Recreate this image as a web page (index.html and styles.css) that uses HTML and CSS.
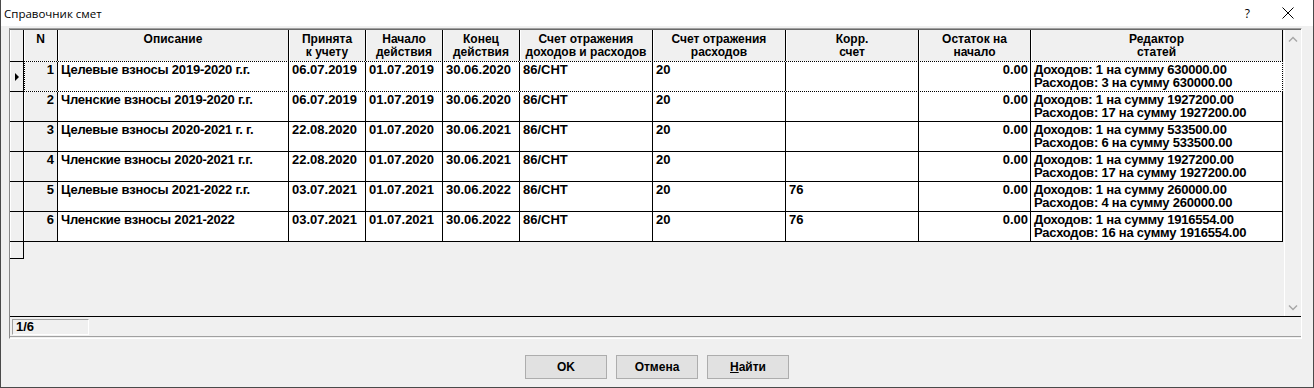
FILE: index.html
```html
<!DOCTYPE html>
<html lang="ru">
<head>
<meta charset="utf-8">
<title>Справочник смет</title>
<link rel="stylesheet" href="styles.css">
</head>
<body>
<div class="window">
  <div class="titlebar">
    <span class="title">Справочник смет</span>
    <span class="help">?</span>
    <svg class="close" width="12" height="12" viewBox="0 0 12 12"><path d="M0.5 0.5 L11.5 11.5 M11.5 0.5 L0.5 11.5" stroke="#000" stroke-width="1" fill="none"/></svg>
  </div>
  <div class="content">
    <div class="frame">
      <div class="gridbox">
        <div class="grid">
          <div class="c h ind"></div>
          <div class="c h">N</div>
          <div class="c h">Описание</div>
          <div class="c h">Принята<br>к учету</div>
          <div class="c h">Начало<br>действия</div>
          <div class="c h">Конец<br>действия</div>
          <div class="c h">Счет отражения<br>доходов и расходов</div>
          <div class="c h">Счет отражения<br>расходов</div>
          <div class="c h">Корр.<br>счет</div>
          <div class="c h">Остаток на<br>начало</div>
          <div class="c h">Редактор<br>статей</div>

          <div class="c ind"><span class="arrow"></span></div>
          <div class="c num">1</div>
          <div class="c t">Целевые взносы 2019-2020 г.г.</div>
          <div class="c">06.07.2019</div>
          <div class="c">01.07.2019</div>
          <div class="c">30.06.2020</div>
          <div class="c">86/СНТ</div>
          <div class="c">20</div>
          <div class="c"></div>
          <div class="c r">0.00</div>
          <div class="c t">Доходов: 1 на сумму 630000.00<br>Расходов: 3 на сумму 630000.00</div>

          <div class="c ind"></div>
          <div class="c num">2</div>
          <div class="c t">Членские взносы 2019-2020 г.г.</div>
          <div class="c">06.07.2019</div>
          <div class="c">01.07.2019</div>
          <div class="c">30.06.2020</div>
          <div class="c">86/СНТ</div>
          <div class="c">20</div>
          <div class="c"></div>
          <div class="c r">0.00</div>
          <div class="c t">Доходов: 1 на сумму 1927200.00<br>Расходов: 17 на сумму 1927200.00</div>

          <div class="c ind"></div>
          <div class="c num">3</div>
          <div class="c t">Целевые взносы 2020-2021 г. г.</div>
          <div class="c">22.08.2020</div>
          <div class="c">01.07.2020</div>
          <div class="c">30.06.2021</div>
          <div class="c">86/СНТ</div>
          <div class="c">20</div>
          <div class="c"></div>
          <div class="c r">0.00</div>
          <div class="c t">Доходов: 1 на сумму 533500.00<br>Расходов: 6 на сумму 533500.00</div>

          <div class="c ind"></div>
          <div class="c num">4</div>
          <div class="c t">Членские взносы 2020-2021 г.г.</div>
          <div class="c">22.08.2020</div>
          <div class="c">01.07.2020</div>
          <div class="c">30.06.2021</div>
          <div class="c">86/СНТ</div>
          <div class="c">20</div>
          <div class="c"></div>
          <div class="c r">0.00</div>
          <div class="c t">Доходов: 1 на сумму 1927200.00<br>Расходов: 17 на сумму 1927200.00</div>

          <div class="c ind"></div>
          <div class="c num">5</div>
          <div class="c t">Целевые взносы 2021-2022 г.г.</div>
          <div class="c">03.07.2021</div>
          <div class="c">01.07.2021</div>
          <div class="c">30.06.2022</div>
          <div class="c">86/СНТ</div>
          <div class="c">20</div>
          <div class="c">76</div>
          <div class="c r">0.00</div>
          <div class="c t">Доходов: 1 на сумму 260000.00<br>Расходов: 4 на сумму 260000.00</div>

          <div class="c ind"></div>
          <div class="c num">6</div>
          <div class="c t">Членские взносы 2021-2022</div>
          <div class="c">03.07.2021</div>
          <div class="c">01.07.2021</div>
          <div class="c">30.06.2022</div>
          <div class="c">86/СНТ</div>
          <div class="c">20</div>
          <div class="c">76</div>
          <div class="c r">0.00</div>
          <div class="c t">Доходов: 1 на сумму 1916554.00<br>Расходов: 16 на сумму 1916554.00</div>

          <div class="c ind"></div>

          <div class="focus"></div>
        </div>
        <div class="scroll">
          <svg width="10" height="6" viewBox="0 0 10 6"><polyline points="1,5.5 5,1.5 9,5.5" stroke="#a6a6a6" stroke-width="1.4" fill="none"/></svg>
          <svg width="10" height="6" viewBox="0 0 10 6"><polyline points="1,0.5 5,4.5 9,0.5" stroke="#a6a6a6" stroke-width="1.4" fill="none"/></svg>
        </div>
      </div>
      <div class="status">
        <div class="panel">1/6</div>
      </div>
    </div>
    <div class="buttons">
      <div class="btn">OK</div>
      <div class="btn">Отмена</div>
      <div class="btn"><span class="ul">Н</span>айти</div>
    </div>
  </div>
</div>
</body>
</html>
```

FILE: styles.css
```css
html, body {
  margin: 0;
  padding: 0;
  background: #f0f0f0;
}

.window {
  width: 1314px;
  height: 388px;
  box-sizing: border-box;
  border: 1px solid #4a4a4a;
  border-top: none;
  background: #f0f0f0;
  display: flex;
  flex-direction: column;
  overflow: hidden;
}

.titlebar {
  height: 26px;
  flex: none;
  background: #fff;
  display: flex;
  align-items: center;
  padding-left: 3px;
  font-family: "Open Sans", "Noto Sans", sans-serif;
  font-size: 11.5px;
  color: #000;
}

.title {
  flex: 1;
}

.help {
  font-size: 12px;
  margin-right: 32px;
}

.close {
  margin-right: 19px;
}

.content {
  flex: 1;
  padding: 2px 0 0 8px;
}

.frame {
  width: 1293px;
  box-sizing: border-box;
  border: 1px solid;
  border-color: #a0a0a0 #ffffff #ffffff #8a8a8a;
  padding-bottom: 1px;
}

.gridbox {
  display: flex;
  height: 288px;
  box-sizing: border-box;
  border-top: 1px solid #696969;
  border-bottom: 1px solid #000;
  background: #f0f0f0;
}

.grid {
  position: relative;
  display: grid;
  width: 1273px;
  grid-template-columns: 14px 34px 231px 77px 77px 77px 133px 133px 133px 112px 252px;
  grid-template-rows: 32px repeat(6, 30px) 17px;
  align-content: start;
  font-family: "Liberation Sans", Arial, sans-serif;
  font-weight: bold;
  font-size: 13px;
  line-height: 13px;
  color: #000;
}

.c {
  box-sizing: border-box;
  border-right: 1px solid #000;
  border-bottom: 1px solid #000;
  background: #fff;
  padding: 1px 2px 0 3px;
  white-space: nowrap;
  overflow: hidden;
}

.t {
  letter-spacing: -0.22px;
}

.h {
  background: #f0f0f0;
  text-align: center;
  font-size: 12px;
  padding: 3px 1px 0 1px;
  box-shadow: inset 1px 0 0 #fff;
}

.ind {
  background: #f0f0f0;
  padding: 0;
  display: flex;
  align-items: center;
  padding-left: 5px;
  box-shadow: inset 1px 0 0 #fff;
}

.h.ind {
  padding: 0;
}

.arrow {
  width: 0;
  height: 0;
  border-left: 4px solid #000;
  border-top: 4px solid transparent;
  border-bottom: 4px solid transparent;
}

.num {
  background: #f0f0f0;
  text-align: right;
  padding-right: 3px;
  box-shadow: inset 1px 0 0 #fff;
}

.r {
  text-align: right;
}

/* keyboard focus rectangle drawn over the current row */
.focus {
  position: absolute;
  left: 14px;
  top: 31px;
  width: 1259px;
  height: 31px;
  box-sizing: border-box;
  border: 1px solid #fff;
  pointer-events: none;
}

.focus::after {
  content: "";
  position: absolute;
  inset: -1px;
  border: 1px dotted #000;
}

.scroll {
  width: 18px;
  box-sizing: border-box;
  background: #f0f0f0;
  box-shadow: inset 1px 0 0 #f0f0f0, inset 2px 0 0 #fff;
  display: flex;
  flex-direction: column;
  justify-content: space-between;
  align-items: center;
  padding: 6px 0 5px 2px;
}

.scroll svg {
  display: block;
}

.status {
  height: 20px;
  box-sizing: border-box;
  border-bottom: 1px solid #a0a0a0;
  padding: 2px 0 0 2px;
}

.panel {
  width: 77px;
  height: 16px;
  box-sizing: border-box;
  border: 1px solid;
  border-color: #a0a0a0 #fff #fff #a0a0a0;
  padding-left: 3px;
  font-family: "Liberation Sans", Arial, sans-serif;
  font-weight: bold;
  font-size: 13px;
  line-height: 14px;
}

.buttons {
  display: flex;
  justify-content: center;
  gap: 9px;
  margin-top: 16px;
  margin-left: -8px;
}

.btn {
  width: 82px;
  height: 24px;
  box-sizing: border-box;
  border: 1px solid #adadad;
  background: #e1e1e1;
  display: flex;
  align-items: center;
  justify-content: center;
  font-family: "Liberation Sans", Arial, sans-serif;
  font-weight: bold;
  font-size: 12px;
  color: #000;
}

.ul {
  text-decoration: underline;
}
```
